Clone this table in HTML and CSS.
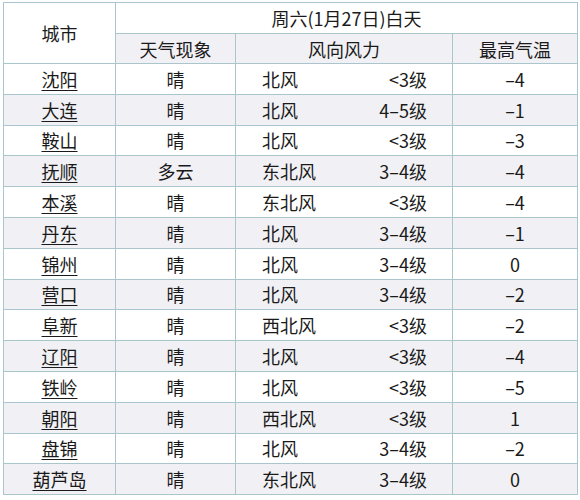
FILE: index.html
```html
<!DOCTYPE html>
<html lang="zh">
<head>
<meta charset="utf-8">
<link rel="stylesheet" href="styles.css">
</head>
<body>
<table class="weather">
  <colgroup>
    <col class="c-city"><col class="c-wx"><col class="c-wind"><col class="c-temp">
  </colgroup>
  <thead>
    <tr class="h1">
      <th rowspan="2" class="city-h">城市</th>
      <th colspan="3" class="day">周六(1月27日)白天</th>
    </tr>
    <tr class="h2">
      <th>天气现象</th>
      <th>风向风力</th>
      <th>最高气温</th>
    </tr>
  </thead>
  <tbody>
    <tr><td class="city"><a href="#">沈阳</a></td><td>晴</td><td class="wind"><span>北风</span><span>&lt;3级</span></td><td>–4</td></tr>
    <tr><td class="city"><a href="#">大连</a></td><td>晴</td><td class="wind"><span>北风</span><span>4–5级</span></td><td>–1</td></tr>
    <tr><td class="city"><a href="#">鞍山</a></td><td>晴</td><td class="wind"><span>北风</span><span>&lt;3级</span></td><td>–3</td></tr>
    <tr><td class="city"><a href="#">抚顺</a></td><td>多云</td><td class="wind"><span>东北风</span><span>3–4级</span></td><td>–4</td></tr>
    <tr><td class="city"><a href="#">本溪</a></td><td>晴</td><td class="wind"><span>东北风</span><span>&lt;3级</span></td><td>–4</td></tr>
    <tr><td class="city"><a href="#">丹东</a></td><td>晴</td><td class="wind"><span>北风</span><span>3–4级</span></td><td>–1</td></tr>
    <tr><td class="city"><a href="#">锦州</a></td><td>晴</td><td class="wind"><span>北风</span><span>3–4级</span></td><td>0</td></tr>
    <tr><td class="city"><a href="#">营口</a></td><td>晴</td><td class="wind"><span>北风</span><span>3–4级</span></td><td>–2</td></tr>
    <tr><td class="city"><a href="#">阜新</a></td><td>晴</td><td class="wind"><span>西北风</span><span>&lt;3级</span></td><td>–2</td></tr>
    <tr><td class="city"><a href="#">辽阳</a></td><td>晴</td><td class="wind"><span>北风</span><span>&lt;3级</span></td><td>–4</td></tr>
    <tr><td class="city"><a href="#">铁岭</a></td><td>晴</td><td class="wind"><span>北风</span><span>&lt;3级</span></td><td>–5</td></tr>
    <tr><td class="city"><a href="#">朝阳</a></td><td>晴</td><td class="wind"><span>西北风</span><span>&lt;3级</span></td><td>1</td></tr>
    <tr><td class="city"><a href="#">盘锦</a></td><td>晴</td><td class="wind"><span>北风</span><span>3–4级</span></td><td>–2</td></tr>
    <tr><td class="city"><a href="#">葫芦岛</a></td><td>晴</td><td class="wind"><span>东北风</span><span>3–4级</span></td><td>0</td></tr>
  </tbody>
</table>
</body>
</html>
```
FILE: styles.css
```css
html, body {
  margin: 0;
  padding: 0;
  background: #ffffff;
}
body {
  padding: 2px 0 0 3px;
  font-family: "Noto Sans CJK SC", "Noto Sans", sans-serif;
  color: #1a1a1a;
  font-size: 18px;
}
.weather {
  border-collapse: collapse;
  table-layout: fixed;
  width: 574px;
}
.c-city { width: 112px; }
.c-wx { width: 120px; }
.c-wind { width: 217px; }
.c-temp { width: 125px; }
.weather th, .weather td {
  border: 1px solid #a9c6cd;
  padding: 0;
  text-align: center;
  font-weight: normal;
  line-height: 20px;
}
.h1 { height: 31px; }
.h2 { height: 30px; }
.h2 th { background: #f1f1f5; }
.city-h { background: #ffffff; }
.day { background: #ffffff; }
.weather tbody tr { height: 30.8px; }
.weather tbody tr:nth-child(even) td { background: #f1f1f5; }
.city a {
  color: #1a1a1a;
  text-decoration: underline;
  text-underline-offset: 3px;
  text-decoration-thickness: 1px;
}
.weather td.wind {
  text-align: left;
  padding: 0 25px 0 26px;
}
.wind span:first-child {
  float: left;
}
.wind span:last-child {
  float: right;
}
```
